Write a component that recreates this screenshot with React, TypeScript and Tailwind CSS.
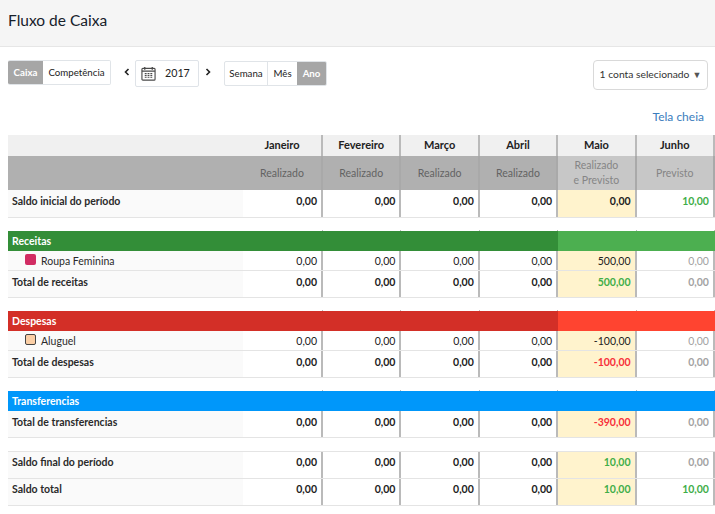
const months = ["Janeiro", "Fevereiro", "Março", "Abril", "Maio", "Junho"]
const kinds = ["Realizado", "Realizado", "Realizado", "Realizado", "Realizado\ne Previsto", "Previsto"]

const cols = "grid grid-cols-[235px_80px_78.4px_78.4px_78.4px_78.4px_78.4px]"

type Tone = "dark" | "muted" | "green" | "red"

const toneClass: Record<Tone, string> = {
  dark: "text-[#222222]",
  muted: "text-[#a3a3a3]",
  green: "text-[#3fae49]",
  red: "text-[#f7303a]",
}

function Cell({ value, tone = "dark", bold, index, h, pt }: { value: string; tone?: Tone; bold?: boolean; index: number; h: string; pt: string }) {
  const bg = index === 4 ? "bg-[#fff3cd]" : "bg-white"
  return (
    <div className={`${bg} ${h} ${pt} ${toneClass[tone]} ${bold ? "font-bold" : ""} border-r-2 border-[#bababa] pr-1 text-right text-[10.5px] leading-[16px]`}>
      {value}
    </div>
  )
}

type RowProps = {
  label: React.ReactNode
  values: [string, Tone?][]
  bold?: boolean
  h?: string
  pt?: string
}

function Row({ label, values, bold = true, h = "h-[26px]", pt = "pt-[3px]" }: RowProps) {
  return (
    <div className={`${cols} border-b border-[#e4e4e4]`}>
      <div className={`${h} ${pt} bg-[#fafafa] pl-1 text-[10.5px] leading-[16px] text-[#2a2a2a] ${bold ? "font-bold" : ""}`}>{label}</div>
      {values.map(([v, t], i) => (
        <Cell key={i} index={i} value={v} tone={t} bold={bold} h={h} pt={pt} />
      ))}
    </div>
  )
}

function GroupBar({ title, dark, light }: { title: string; dark: string; light: string }) {
  return (
    <>
      {/* stubs of the column lines above the coloured bar */}
      <div className={`${cols} h-px`}>
        <div />
        {months.map((m) => (
          <div key={m} className="border-r border-[#bababa]" />
        ))}
      </div>
      <div className={`${cols} h-5 text-[10.5px] font-bold leading-[20px] text-white`}>
        <div className={`${dark} col-span-5 pl-1`}>{title}</div>
        <div className={`${light} col-span-2`} />
      </div>
    </>
  )
}

function Tag({ color }: { color: string }) {
  return <span className={`${color} mr-[5px] ml-[13px] inline-block h-[11px] w-[11px] -translate-y-[3px] rounded-[2px] align-middle`} />
}

const zeros: [string, Tone?][] = [["0,00"], ["0,00"], ["0,00"], ["0,00"]]

function CalendarIcon() {
  return (
    <svg width="15" height="15" viewBox="0 0 16 16" fill="none" stroke="#4a4a4a" strokeWidth="1.2">
      <rect x="1" y="2.5" width="14" height="12.5" rx="1" />
      <path d="M1 5.5h14M4 1v3M12 1v3" strokeWidth="1.4" />
      <path d="M4 8h2M7 8h2M10 8h2M4 10h2M7 10h2M10 10h2M4 12h2M7 12h2M10 12h2" strokeWidth="1.1" />
    </svg>
  )
}

function Chevron({ dir }: { dir: "left" | "right" }) {
  return (
    <svg width="6" height="8" viewBox="0 0 6 8" fill="none" stroke="#222222" strokeWidth="1.6">
      <path d={dir === "left" ? "M4.5 1 1.5 4l3 3" : "M1.5 1l3 3-3 3"} />
    </svg>
  )
}

export default function App() {
  return (
    <div className="h-[514px] w-[715px] overflow-hidden bg-white font-['Lato','Open_Sans',sans-serif] text-[#222222]">
      <div className="h-[47px] border-b border-[#e6e6e6] bg-[#f5f5f5] pl-2 pt-2 text-[15.5px] leading-[24px] text-[#16202a]">
        Fluxo de Caixa
      </div>

      {/* Toolbar */}
      <div className="mt-[13px] flex items-start pl-2 pr-[7px] text-[9.7px]">
        <div className="flex h-[25px] overflow-hidden rounded-[2px] border border-[#e0e4e8] border-l-0 leading-[23px]">
          <div className="w-[35px] bg-[#a6a6a6] text-center font-bold text-white">Caixa</div>
          <div className="w-[67px] bg-white text-center">Competência</div>
        </div>
        <div className="ml-[13px] mt-2"><Chevron dir="left" /></div>
        <div className="ml-[5px] flex h-[27px] w-[64px] items-center rounded-[2px] border border-[#dfe3e8] pl-[5px] text-[10.7px]">
          <CalendarIcon />
          <span className="ml-[9px]">2017</span>
        </div>
        <div className="ml-[6px] mt-2"><Chevron dir="right" /></div>
        <div className="ml-[13px] mt-px flex h-[25px] w-[103px] overflow-hidden rounded-[2px] border border-[#e0e4e8] leading-[23px]">
          <div className="w-[43px] border-r border-[#e0e4e8] text-center">Semana</div>
          <div className="w-[29px] text-center">Mês</div>
          <div className="flex-1 bg-[#a6a6a6] text-center font-bold text-white">Ano</div>
        </div>
        <div className="ml-auto flex h-[30px] w-[115px] items-center justify-center gap-[3px] rounded-[4px] border border-[#d9d9d9] text-[10.3px] text-[#333333]">
          1 conta selecionado
          <span className="text-[9px] text-[#555555]">▼</span>
        </div>
      </div>

      <div className="mt-[19px] pr-[11px] text-right text-[12px] leading-[16px] text-[#3b7dbd]">Tela cheia</div>

      {/* Table */}
      <div className="mt-[10px] pl-2">
        <div className={`${cols} h-[21px] bg-[#f0f0f0] text-[11px] font-bold leading-[20px] text-[#222222]`}>
          <div />
          {months.map((m) => (
            <div key={m} className="border-r-2 border-[#bababa] text-center">{m}</div>
          ))}
        </div>
        <div className={`${cols} h-[34px] text-center text-[10.5px] leading-[15px]`}>
          <div className="bg-[#b0b0b0]" />
          {kinds.map((k, i) => (
            <div
              key={i}
              className={`${i < 4 ? "bg-[#b0b0b0] text-[#636363]" : "bg-[#c7c7c7] text-[#858585]"} flex items-center justify-center whitespace-pre-line border-r-2 border-[#a9a9a9]`}
            >
              {k}
            </div>
          ))}
        </div>
        <Row
          label="Saldo inicial do período"
          h="h-[27px]"
          values={[...zeros, ["0,00"], ["10,00", "green"]]}
        />

        <div className="mt-3">
          <GroupBar title="Receitas" dark="bg-[#338e38]" light="bg-[#4caf50]" />
          <Row
            label={<><Tag color="bg-[#d12c63]" />Roupa Feminina</>}
            bold={false}
            h="h-[19px]"
            pt="pt-[2px]"
            values={[...zeros, ["500,00"], ["0,00", "muted"]]}
          />
          <Row label="Total de receitas" values={[...zeros, ["500,00", "green"], ["0,00", "muted"]]} />
        </div>

        <div className="mt-3">
          <GroupBar title="Despesas" dark="bg-[#d32f27]" light="bg-[#ff4430]" />
          <Row
            label={<><Tag color="bg-[#fbcfa6] border border-[#444444]" />Aluguel</>}
            bold={false}
            h="h-[19px]"
            pt="pt-[2px]"
            values={[...zeros, ["-100,00"], ["0,00", "muted"]]}
          />
          <Row label="Total de despesas" values={[...zeros, ["-100,00", "red"], ["0,00", "muted"]]} />
        </div>

        <div className="mt-3">
          <GroupBar title="Transferencias" dark="bg-[#0097fa]" light="bg-[#0097fa]" />
          <Row label="Total de transferencias" values={[...zeros, ["-390,00", "red"], ["0,00", "muted"]]} />
        </div>

        <div className="mt-[13px] border-t border-[#e4e4e4]">
          <Row label="Saldo final do período" pt="pt-[2px]" values={[...zeros, ["10,00", "green"], ["0,00", "muted"]]} />
          <Row label="Saldo total" pt="pt-[2px]" values={[...zeros, ["10,00", "green"], ["10,00", "green"]]} />
        </div>
      </div>
    </div>
  )
}
